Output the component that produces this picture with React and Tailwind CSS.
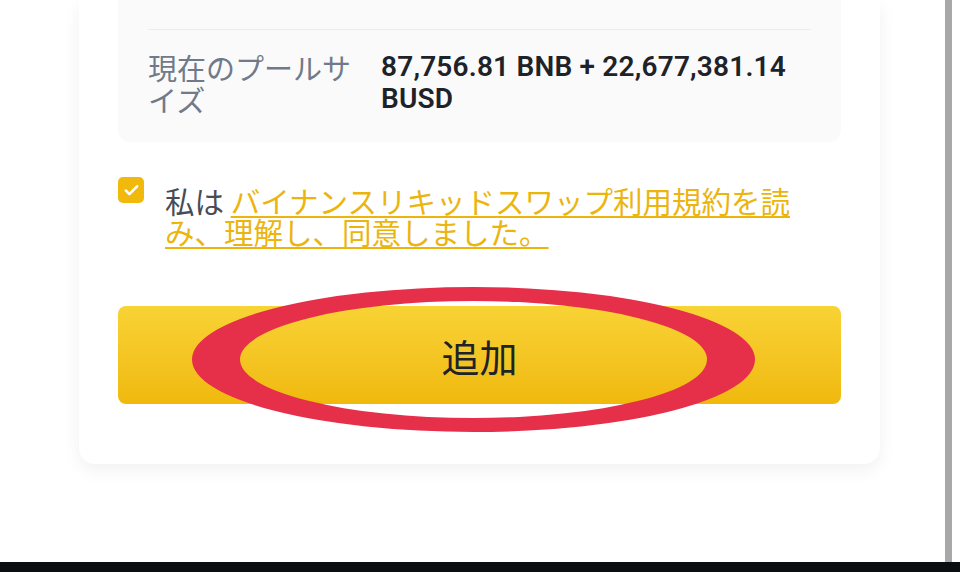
import { Check } from "lucide-react";

const jp = { fontFamily: '"Noto Sans CJK JP", "Noto Sans", sans-serif' };
const num = { fontFamily: 'Roboto, "Liberation Sans", "Noto Sans CJK JP", sans-serif' };

const RedCircle = () => (
  <svg
    className="pointer-events-none absolute left-[190px] top-[285px]"
    width="570"
    height="150"
    viewBox="0 0 570 150"
  >
    <path
      fillRule="evenodd"
      fill="#e6304a"
      d="M2 74.5a281.5 72.5 0 1 0 563 0a281.5 72.5 0 1 0 -563 0Z M50 74.5a233.5 58.5 0 1 0 467 0a233.5 58.5 0 1 0 -467 0Z"
    />
  </svg>
);

export default function App() {
  return (
    <div className="relative flex h-[572px] w-[960px] flex-col overflow-hidden bg-white">
      <div className="flex flex-1">
        <div className="w-[945px]">
          <div className="ml-[79px] w-[801px] rounded-b-[16px] bg-white px-[39px] pb-[60px] shadow-[0_6px_18px_rgba(0,0,0,0.06)]">
            <div className="rounded-b-[12px] bg-[#fafafa] px-[30px] pb-[27px] pt-[29px]">
              <div className="border-t border-[#eaecef]" />
              <div className="mt-[21px] flex">
                <div className="w-[220px] shrink-0 text-[29px] leading-[32px] text-[#707a8a]" style={jp}>
                  現在のプールサイズ
                </div>
                <div
                  className="ml-[13px] flex-1 text-[28px] font-semibold leading-[32px] tracking-[0.2px] text-[#1e2329]"
                  style={num}
                >
                  87,756.81 BNB + 22,677,381.14 BUSD
                </div>
              </div>
            </div>

            <div className="mt-[35px] flex items-start">
              <div className="flex h-[26px] w-[26px] shrink-0 items-center justify-center rounded-[5px] bg-[#f0b90b]">
                <Check size={17} strokeWidth={3.5} color="#ffffff" />
              </div>
              <p className="ml-[21px] mt-[8px] w-[640px] text-[29.5px] leading-[31px] text-[#474d57]" style={jp}>
                私は{" "}
                <span className="text-[#ebb50e] underline decoration-[2px] underline-offset-[3px]">
                  バイナンスリキッドスワップ利用規約を読み、理解し、同意しました。
                </span>
              </p>
            </div>

            <button
              className="mt-[59px] flex h-[98px] w-full items-center justify-center rounded-[8px] bg-gradient-to-b from-[#f8d334] to-[#f0b90b] text-[38px] text-[#1e2329]"
              style={jp}
            >
              追加
            </button>
          </div>
        </div>
        <div className="w-[7px] bg-[#a8a8a8]" />
      </div>
      <div className="h-[10px] bg-[#0b0e11]" />
      <RedCircle />
    </div>
  );
}
